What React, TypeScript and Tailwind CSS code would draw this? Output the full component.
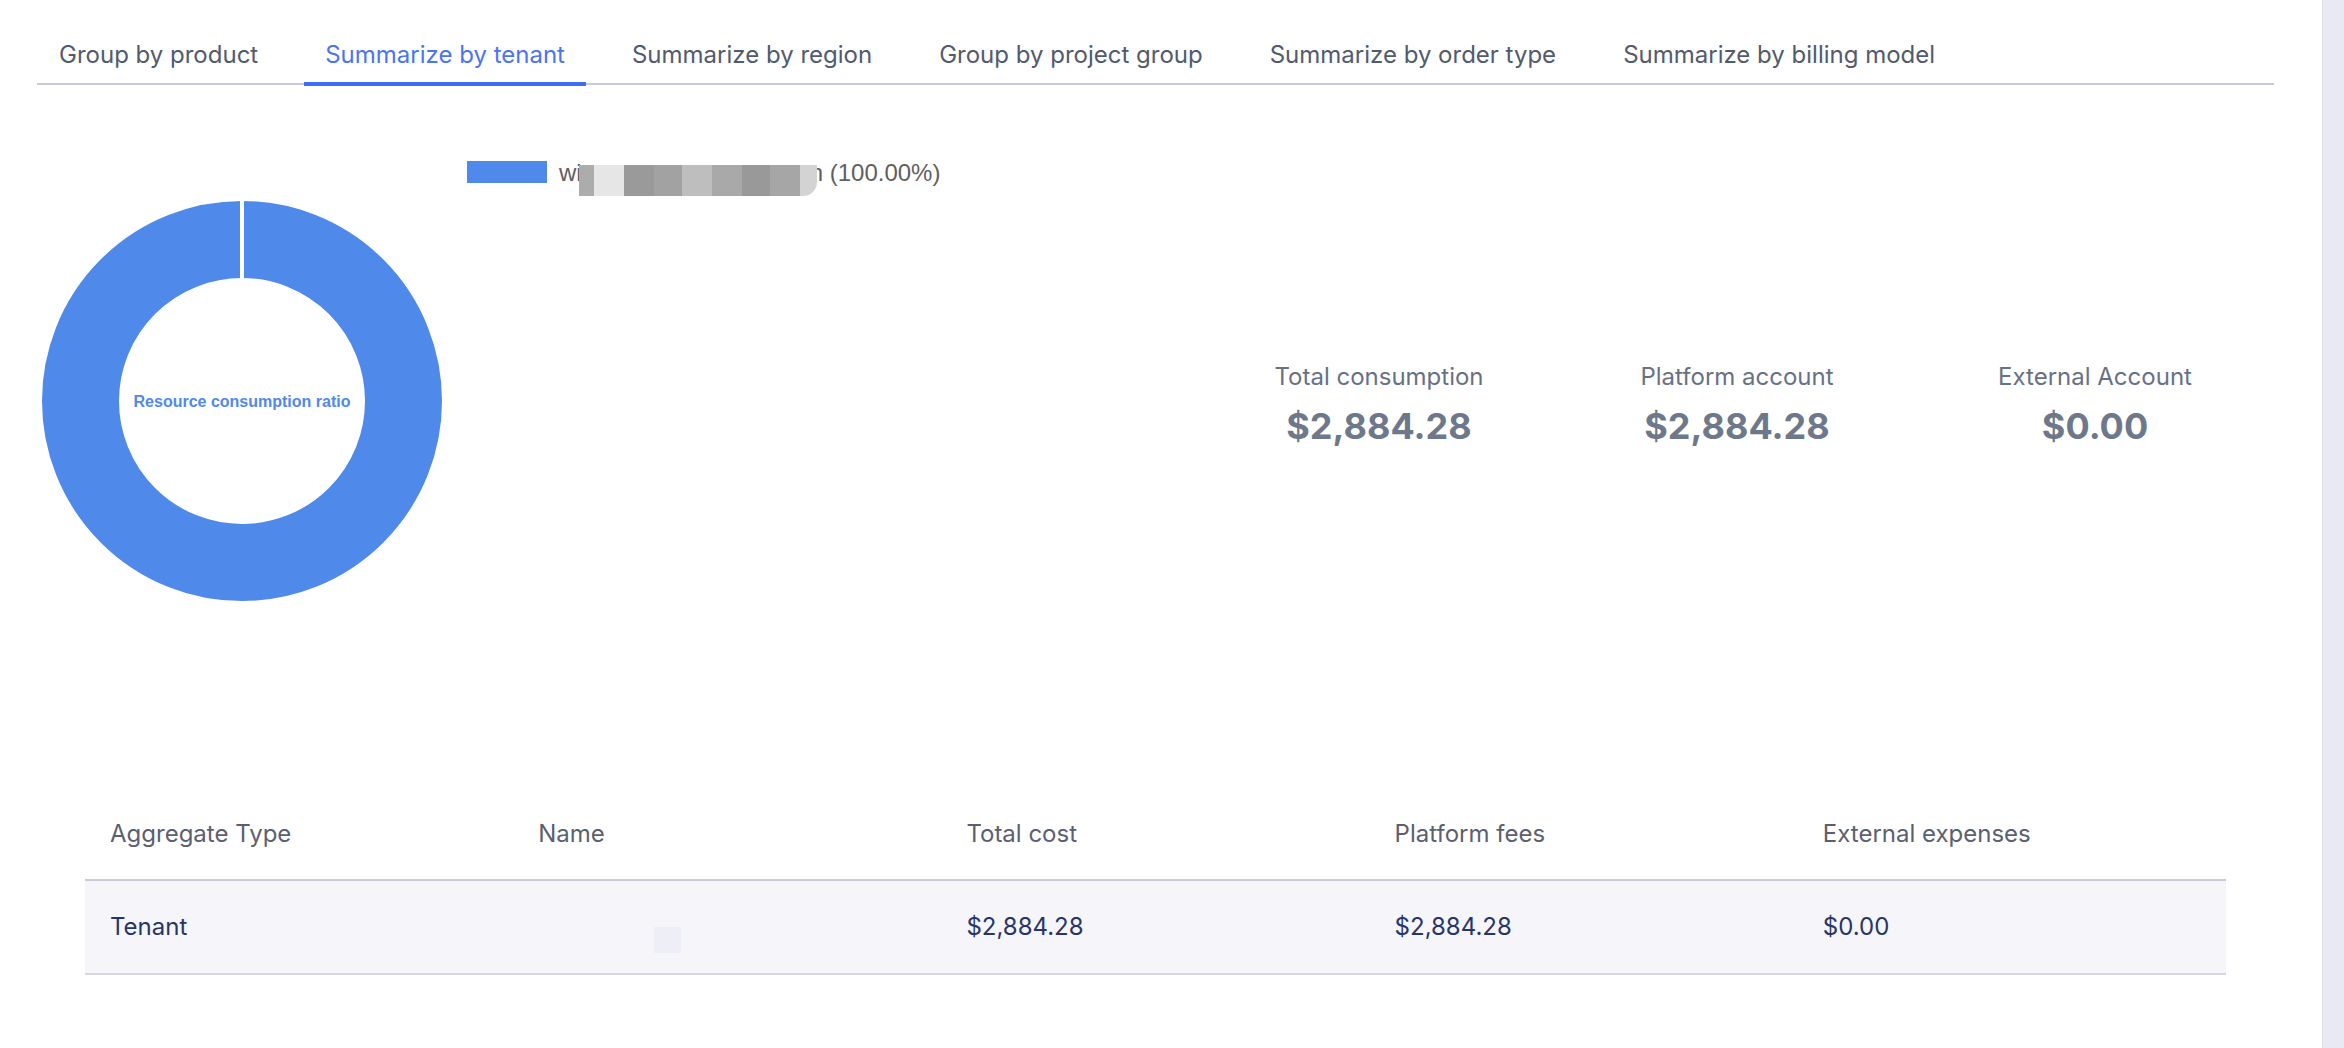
import { useState } from "react"

const tabs = [
  "Group by product",
  "Summarize by tenant",
  "Summarize by region",
  "Group by project group",
  "Summarize by order type",
  "Summarize by billing model",
]

const summary = [
  { label: "Total consumption", value: "$2,884.28" },
  { label: "Platform account", value: "$2,884.28" },
  { label: "External Account", value: "$0.00" },
]

const columns = ["Aggregate Type", "Name", "Total cost", "Platform fees", "External expenses"]

// pixelated block hiding the tenant name in the legend
const mosaic = [
  { w: 15, c: "bg-[#acacac]" },
  { w: 30, c: "bg-[#e6e6e6]" },
  { w: 30, c: "bg-[#9a9a9a]" },
  { w: 28, c: "bg-[#a2a2a2]" },
  { w: 30, c: "bg-[#bebebe]" },
  { w: 30, c: "bg-[#a9a9a9]" },
  { w: 28, c: "bg-[#999999]" },
  { w: 30, c: "bg-[#a6a6a6]" },
  { w: 17, c: "bg-[#d3d3d3] rounded-br-[14px]" },
]

const widthClass: Record<number, string> = {
  15: "w-[15px]",
  17: "w-[17px]",
  28: "w-[28px]",
  30: "w-[30px]",
}

function Donut() {
  return (
    <svg width="404" height="404" viewBox="0 0 404 404" className="shrink-0">
      <circle cx="202" cy="202" r="161.5" fill="none" stroke="#4f89ea" strokeWidth="77" />
      <rect x="200" y="0" width="4" height="81" fill="#ffffff" />
      <text
        x="202"
        y="202"
        textAnchor="middle"
        dominantBaseline="central"
        fill="#4f89ea"
        fontFamily="'Liberation Sans', Arial, sans-serif"
        fontWeight="700"
        fontSize="16"
      >
        Resource consumption ratio
      </text>
    </svg>
  )
}

export default function App() {
  const [active, setActive] = useState(1)

  return (
    <div className="flex h-screen w-full bg-white font-['Inter',sans-serif]">
      <div className="flex-1 min-w-0 pl-[37px] pr-[48px]">
        {/* Tabs */}
        <div className="mt-[26px] flex border-b-2 border-[#c8cbd9] pl-[1px]">
          {tabs.map((tab, i) => (
            <button
              key={tab}
              onClick={() => setActive(i)}
              className={`relative mr-[25px] flex h-[57px] items-center px-[21px] text-[24px] ${
                i === active ? "text-[#4a74f0]" : "text-[#515a6e]"
              }`}
            >
              {tab}
              {i === active && (
                <span className="absolute inset-x-0 bottom-[-3px] h-[4px] bg-[#3d6ef3]" />
              )}
            </button>
          ))}
        </div>

        {/* Chart + summary */}
        <div className="flex items-start pt-[74px]">
          <div className="flex w-[1163px] shrink-0 items-start">
            <div className="ml-[3px] mt-[40px]">
              <Donut />
            </div>
            <div className="ml-[23px] flex items-start font-['Liberation_Sans',Arial,sans-serif] text-[24px] leading-[28px] text-[#606060]">
              <span className="mt-[2px] h-[22px] w-[80px] bg-[#4f89ea]" />
              <span className="ml-[12px]">wi</span>
              <span className="relative z-10 -ml-[3px] mt-[6px] flex h-[31px]">
                {mosaic.map((m, i) => (
                  <span key={i} className={`h-full ${widthClass[m.w]} ${m.c}`} />
                ))}
              </span>
              <span className="-ml-[7px]">n (100.00%)</span>
            </div>
          </div>

          <div className="mt-[202px] grid flex-1 grid-cols-3 text-center">
            {summary.map((s) => (
              <div key={s.label} className="flex flex-col items-center">
                <span className="text-[24px] leading-[32px] text-[#687184]">{s.label}</span>
                <span className="mt-[11px] text-[36px] font-bold leading-[44px] text-[#6e788b]">
                  {s.value}
                </span>
              </div>
            ))}
          </div>
        </div>

        {/* Table */}
        <div className="mx-[48px] mt-[186px]">
          <div className="grid h-[92px] grid-cols-5 items-center border-b-2 border-[#c9cbdb]">
            {columns.map((c) => (
              <div key={c} className="pl-[25px] text-[24px] text-[#5b6070]">
                {c}
              </div>
            ))}
          </div>
          <div className="grid h-[94px] grid-cols-5 items-center border-b-2 border-[#d6d8e8] bg-[#f5f5fa] text-[24px] text-[#283566]">
            <div className="pl-[25px]">Tenant</div>
            <div className="pl-[25px]">
              <span className="ml-[116px] mt-[25px] block h-[26px] w-[27px] bg-[#eeeef7]" />
            </div>
            <div className="pl-[25px]">$2,884.28</div>
            <div className="pl-[25px]">$2,884.28</div>
            <div className="pl-[25px]">$0.00</div>
          </div>
        </div>
      </div>

      {/* Scrollbar track */}
      <div className="w-[22px] shrink-0 border-l border-[#dcdfea] bg-[#e8e9f3]" />
    </div>
  )
}
